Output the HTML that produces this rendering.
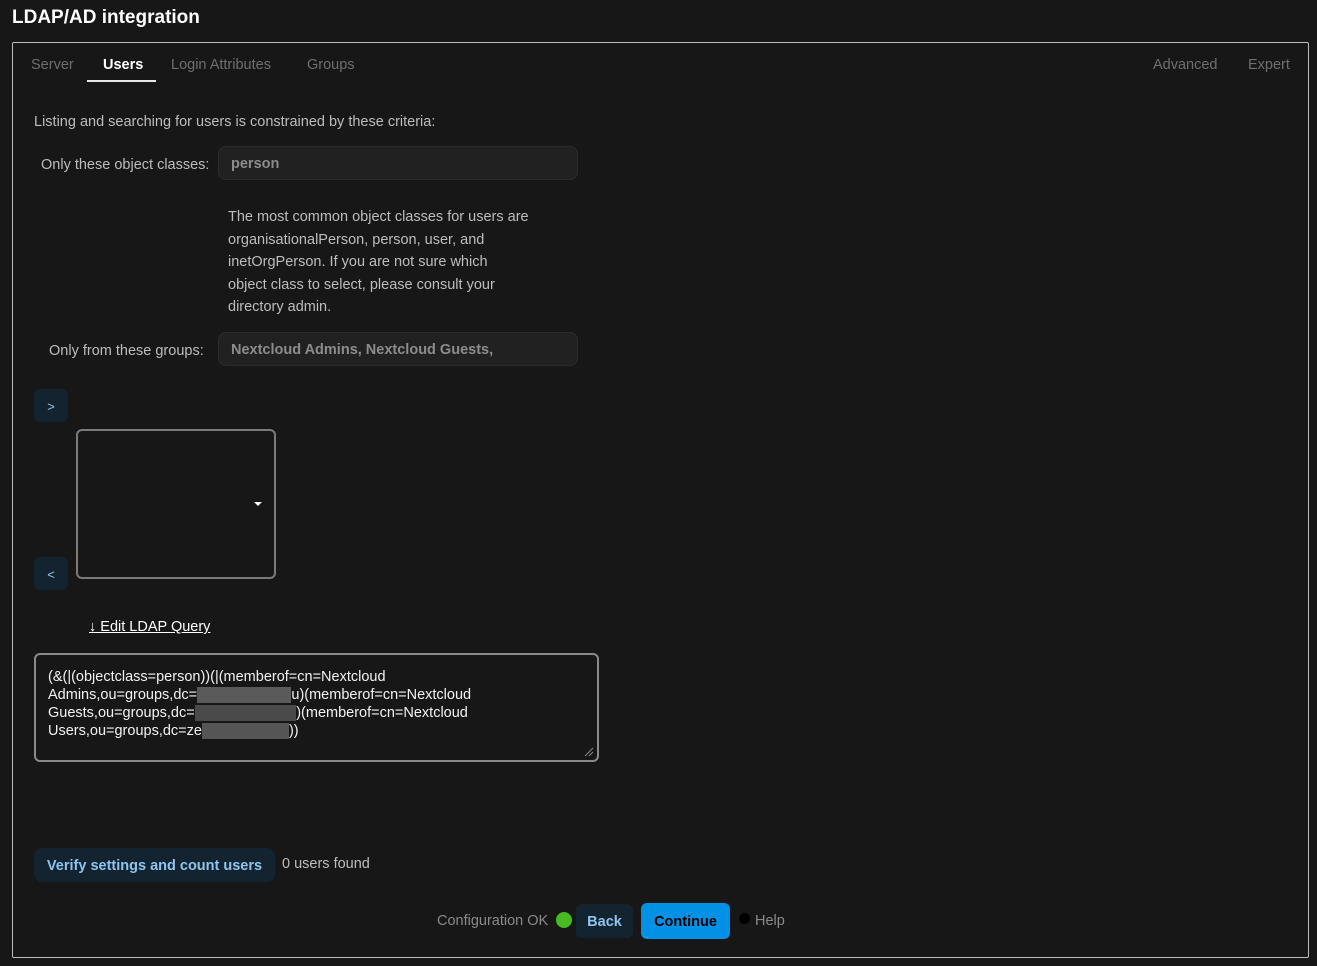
<!DOCTYPE html>
<html><head><meta charset="utf-8"><style>
body{margin:0;background:#171717;width:1317px;height:966px;overflow:hidden;font-family:"Liberation Sans",sans-serif;color:#cfcfcf;position:relative}
.a{position:absolute;white-space:nowrap}
h1{position:absolute;left:12px;top:7px;margin:0;font-size:19px;font-weight:bold;color:#fff}
.panel{position:absolute;left:12px;top:42px;width:1295px;height:914px;border:1px solid #bdbdbd;border-radius:2px}
.tab{font-size:14.5px;color:#6f6f6f;top:57px}
.lbl{font-size:14.5px;color:#bdbdbd}
.inp{position:absolute;background:#212121;border:1px solid #2c2c2c;border-radius:8px;color:#8c8c8c;font-weight:bold;font-size:14.5px;box-sizing:border-box;padding:9px 12px;overflow:hidden;white-space:nowrap}
.sb{position:absolute;width:34px;height:33px;background:#132430;border-radius:6px;color:#8fc4f0;font-size:13px;text-align:center;line-height:35px}
.help{font-size:14.5px;color:#bdbdbd;line-height:22.5px}
</style></head><body>
<h1>LDAP/AD integration</h1>
<div class="panel"></div>
<div class="a tab" style="left:31px">Server</div>
<div class="a tab" style="left:103px;color:#fff;font-weight:bold">Users</div>
<div class="a" style="left:87px;top:80px;width:69px;height:2px;background:#e8e8e8"></div>
<div class="a tab" style="left:171px">Login Attributes</div>
<div class="a tab" style="left:307px">Groups</div>
<div class="a tab" style="left:1153px">Advanced</div>
<div class="a tab" style="left:1248px">Expert</div>
<div class="a lbl" style="left:34px;top:114px">Listing and searching for users is constrained by these criteria:</div>
<div class="a lbl" style="left:41px;top:157px">Only these object classes:</div>
<div class="inp" style="left:218px;top:146px;width:360px;height:34px">person</div>
<div class="a help" style="left:228px;top:206px">The most common object classes for users are<br>organisationalPerson, person, user, and<br>inetOrgPerson. If you are not sure which<br>object class to select, please consult your<br>directory admin.</div>
<div class="a lbl" style="left:49px;top:343px">Only from these groups:</div>
<div class="inp" style="left:218px;top:332px;width:360px;height:34px">Nextcloud Admins, Nextcloud Guests,</div>
<div class="sb" style="left:34px;top:389px">&gt;</div>
<div class="a" style="left:76px;top:429px;width:196px;height:146px;border:2px solid #7a7a7a;border-radius:6px"></div>
<div class="a" style="left:254px;top:502px;width:0;height:0;border-left:4px solid transparent;border-right:4px solid transparent;border-top:4px solid #fff"></div>
<div class="sb" style="left:34px;top:557px">&lt;</div>
<div class="a" style="left:89px;top:619px;font-size:14.5px;color:#fff;text-decoration:underline">↓ Edit LDAP Query</div>
<div class="a" style="left:34px;top:653px;width:561px;height:105px;border:2px solid #8a8a8a;border-radius:6px"></div>
<svg class="a" style="left:582px;top:745px" width="12" height="12"><path d="M11 3L3 11M11 7L7 11" stroke="#888" stroke-width="1"/></svg>
<div class="a" style="left:48px;top:668px;font-size:14.5px;line-height:18px;color:#f2f2f2">(&amp;(|(objectclass=person))(|(memberof=cn=Nextcloud<br>Admins,ou=groups,dc=<span style="background:#5a5a5a;color:transparent">xxxxxxxxxxxxx</span>u)(memberof=cn=Nextcloud<br>Guests,ou=groups,dc=<span style="background:#4a4a4a;color:transparent">xxxxxxxxxxxxxx</span>)(memberof=cn=Nextcloud<br>Users,ou=groups,dc=ze<span style="background:#555;color:transparent">xxxxxxxxxxxx</span>))</div>
<div class="a" style="left:34px;top:848px;width:241px;height:34px;background:#132430;border-radius:8px;color:#8fc4f0;font-weight:bold;font-size:14.5px;line-height:36px;text-align:center">Verify settings and count users</div>
<div class="a lbl" style="left:282px;top:856px">0 users found</div>
<div class="a lbl" style="left:437px;top:913px;color:#8a8a8a">Configuration OK</div>
<div class="a" style="left:556px;top:912px;width:16px;height:16px;border-radius:50%;background:#46ba1f"></div>
<div class="a" style="left:576px;top:904px;width:57px;height:34px;background:#132430;border-radius:6px;color:#8fc4f0;font-weight:bold;font-size:14.5px;line-height:36px;text-align:center">Back</div>
<div class="a" style="left:641px;top:903px;width:89px;height:36px;background:#0391e6;border-radius:6px;color:#000;font-weight:bold;font-size:14.5px;line-height:38px;text-align:center">Continue</div>
<div class="a" style="left:739px;top:913px;width:11px;height:11px;border-radius:50%;background:#000"></div>
<div class="a lbl" style="left:755px;top:913px;color:#8a8a8a">Help</div>
</body></html>
